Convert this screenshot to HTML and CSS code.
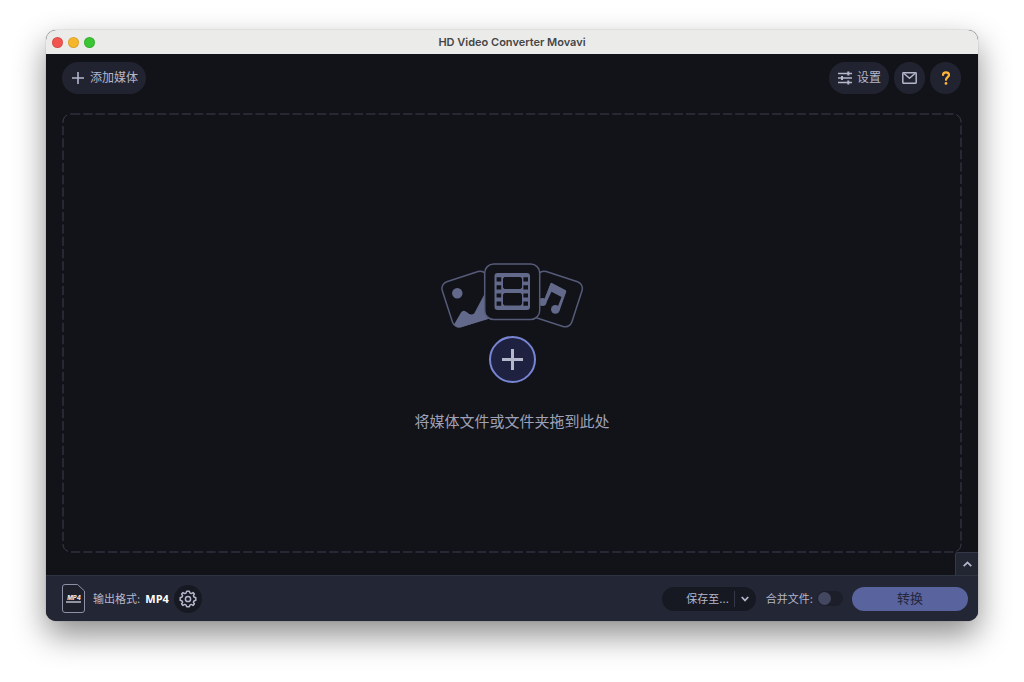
FILE: index.html
```html
<!DOCTYPE html>
<html lang="zh-CN">
<head>
<meta charset="utf-8">
<meta name="viewport" content="width=device-width, initial-scale=1">
<title>HD Video Converter Movavi</title>
<link rel="stylesheet" href="styles.css">
</head>
<body>
<div class="window">
  <header class="titlebar">
    <div class="lights">
      <button class="light light-close" aria-label="关闭"></button>
      <button class="light light-min" aria-label="最小化"></button>
      <button class="light light-zoom" aria-label="缩放"></button>
    </div>
    <h1 class="title">HD Video Converter Movavi</h1>
  </header>

  <nav class="toolbar">
    <button class="pill pill-add">
      <svg width="12" height="12" viewBox="0 0 12 12" fill="none" stroke="currentColor" stroke-width="1.6"><path d="M6 0v12M0 6h12"/></svg>
      <span>添加媒体</span>
    </button>
    <span class="spacer"></span>
    <button class="pill pill-settings">
      <svg width="14" height="14" viewBox="0 0 14 14" fill="none" stroke="currentColor" stroke-width="1.5"><path d="M0 2.500h14M0 7h14M0 11.500h14"/><path d="M10.300 0.500v4M4 5v4M10.300 9.500v4" stroke-width="2"/></svg>
      <span>设置</span>
    </button>
    <button class="pill pill-round" aria-label="邮件">
      <svg width="15" height="12" viewBox="0 0 15 12" fill="none" stroke="currentColor" stroke-width="1.5" stroke-linejoin="round"><rect x="0.8" y="0.8" width="13.4" height="10.4" rx="0.6"/><path d="M2 1.500l5.500 4.800 5.500-4.800"/></svg>
    </button>
    <button class="pill pill-round pill-help" aria-label="帮助">
      <svg width="10" height="14" viewBox="0 0 10 14" fill="none" stroke="currentColor" stroke-width="2.2" stroke-linecap="round"><path d="M2 4C2 2.200 3.200 1.300 5 1.300S8 2.300 8 4C8 6 5 6.200 5 8.800"/><circle cx="5" cy="12.400" r="1.400" fill="currentColor" stroke="none"/></svg>
    </button>
  </nav>

  <main class="content">
    <section class="dropzone">
      <svg class="outline" width="100%" height="100%"><rect width="100%" height="100%" rx="8"/></svg>
      <svg class="cards" width="146" height="68" viewBox="439 262 146 68" fill="none" stroke="#555b78" stroke-width="1.500">
        <rect x="446.200" y="275.500" width="47" height="47" rx="7" transform="rotate(-18 469.700 299)"/>
        <circle cx="457.300" cy="293.300" r="5.200" fill="#62698a" stroke="none"/>
        <path d="M454 324.500L461 312.500Q463.300 309 467 312.200Q471 316 474.300 313.200L485 293V312L490 318.500L461 327.300Q456.500 328.500 454 324.500Z" fill="#62698a" stroke="none"/>
        <rect x="531.100" y="275.500" width="47" height="47" rx="7" transform="rotate(18 554.600 299)"/>
        <g fill="#62698a" stroke="none">
          <circle cx="542.500" cy="302" r="4"/>
          <circle cx="555.400" cy="309.300" r="4.400"/>
          <path d="M550.500 283.200Q551 282.600 552 283.100L565.800 290.200Q566.500 290.800 566.200 292L559.600 310.500L556.900 309L561.500 297L551.500 291.800L546.300 302.800L544 300Z"/>
        </g>
        <rect x="484.700" y="264" width="55" height="55.500" rx="9" fill="#121318"/>
        <path fill="#62698a" stroke="none" fill-rule="evenodd" d="M497.500 273h29.500a3 3 0 0 1 3 3v31a3 3 0 0 1-3 3h-29.500a3 3 0 0 1-3-3v-31a3 3 0 0 1 3-3z
          M504.500 277l-1.500 1.500v9l1.500 1.500h16l1.500-1.500v-9l-1.500-1.500z M504.500 293l-1.500 1.500v9.500l1.500 1.500h16l1.500-1.500v-9.500l-1.500-1.500z
          M496.600 277.300h4.600v4.200h-4.600z M496.600 285.300h4.600v4.200h-4.600z M496.600 293.400h4.600v4.200h-4.600z M496.600 301.500h4.600v4.200h-4.600z
          M523.400 277.300h4.600v4.200h-4.600z M523.400 285.300h4.600v4.200h-4.600z M523.400 293.400h4.600v4.200h-4.600z M523.400 301.500h4.600v4.200h-4.600z"/>
      </svg>
      <button class="add-circle" aria-label="添加媒体">
        <svg width="21" height="21" viewBox="0 0 21 21" stroke="currentColor" stroke-width="3"><path d="M10.500 0v21M0 10.500h21"/></svg>
      </button>
      <p class="hint">将媒体文件或文件夹拖到此处</p>
    </section>
    <button class="expand" aria-label="展开">
      <svg width="9" height="6" viewBox="0 0 9 6" fill="none" stroke="currentColor" stroke-width="1.800"><path d="M0.700 5.200l3.800-3.800 3.800 3.800"/></svg>
    </button>
  </main>

  <footer class="footer">
    <svg class="format-icon" width="23" height="29" viewBox="0 0 23 29"><path d="M3 0.500H15.500L22.500 7V26a2.500 2.500 0 0 1-2.500 2.500H3A2.500 2.500 0 0 1 0.500 26V3A2.500 2.500 0 0 1 3 0.500Z" fill="#1e202b" stroke="#8d91a5"/><text x="12" y="16" text-anchor="middle">MP4</text><path d="M4 18h15" stroke="#b9bccb" stroke-width="1.400"/></svg>
    <p class="format">输出格式: <strong>MP4</strong></p>
    <button class="gear" aria-label="格式设置">
      <svg width="18" height="18" viewBox="-9 -9 18 18" fill="none" stroke="currentColor" stroke-width="1.500" stroke-linejoin="round"><path d="M-1.300-7.800H1.300L2-5.900 3.300-5.400 5-6.400 6.400-5 5.400-3.300 5.900-2 7.800-1.300V1.300L5.900 2 5.400 3.300 6.400 5 5 6.400 3.300 5.400 2 5.900 1.300 7.800H-1.300L-2 5.900-3.300 5.400-5 6.400-6.400 5-5.400 3.300-5.900 2-7.800 1.300V-1.300L-5.900-2-5.400-3.300-6.400-5-5-6.400-3.300-5.400-2-5.900Z"/><circle r="2.600"/></svg>
    </button>
    <span class="spacer"></span>
    <div class="save">
      <button class="save-main">保存至...</button>
      <button class="save-menu" aria-label="更多保存选项">
        <svg width="8" height="6" viewBox="0 0 8 6" fill="none" stroke="currentColor" stroke-width="1.800"><path d="M0.800 1l3.200 3.500L7.200 1"/></svg>
      </button>
    </div>
    <label class="merge">合并文件: <input type="checkbox" class="toggle"></label>
    <button class="convert">转换</button>
  </footer>
</div>
</body>
</html>
```
FILE: styles.css
```css
* {
  box-sizing: border-box;
}

body {
  margin: 0;
  min-height: 100vh;
  padding: 30px 46px 61px;
  display: flex;
  background: #fff;
  color: #b4b7cc;
  font: 11px/16px Inter, "Noto Sans CJK SC", sans-serif;
}

button {
  padding: 0;
  border: 0;
  background: none;
  color: inherit;
  font: inherit;
}

svg {
  display: block;
  flex: none;
}

.spacer {
  flex: 1;
}

.window {
  flex: 1;
  display: flex;
  flex-direction: column;
  overflow: hidden;
  border-radius: 10px;
  background: #121318;
  box-shadow: 0 0 1px rgba(0, 0, 0, 0.5), 0 14px 32px rgba(0, 0, 0, 0.45);
}

.titlebar {
  display: grid;
  grid-template-columns: 1fr auto 1fr;
  align-items: center;
  height: 24px;
  padding: 0 6px;
  background: #ebebea;
}

.lights {
  display: flex;
  gap: 5px;
}

.light {
  width: 11px;
  height: 11px;
  border: 1px solid rgba(0, 0, 0, 0.1);
  border-radius: 50%;
}

.light-close {
  background: #f2544f;
}

.light-min {
  background: #f6b62c;
}

.light-zoom {
  background: #3ac532;
}

.title {
  margin: 0;
  color: #454545;
  font-size: 11px;
  font-weight: 600;
}

.toolbar {
  display: flex;
  gap: 5px;
  padding: 8px 17px 8px 16px;
  font-size: 12px;
}

.pill {
  display: flex;
  align-items: center;
  justify-content: center;
  height: 32px;
  border-radius: 16px;
  background: #212430;
}

.pill-add {
  gap: 6px;
  padding: 0 8px 0 10px;
}

.pill-settings {
  gap: 5px;
  padding: 0 8px 0 9px;
}

.pill-round {
  width: 31px;
}

.pill-help {
  color: #fdb338;
}

.content {
  position: relative;
  flex: 1;
  display: flex;
  padding: 12px 17px 23px;
}

.dropzone {
  position: relative;
  flex: 1;
  display: flex;
  flex-direction: column;
  align-items: center;
  justify-content: center;
  padding-top: 28px;
}

.outline {
  position: absolute;
  inset: 0;
  overflow: visible;
  fill: none;
  stroke: #3b3e4f;
  stroke-dasharray: 9.3 3;
}

.add-circle {
  display: grid;
  place-items: center;
  width: 47px;
  height: 47px;
  margin-top: 6px;
  border: 2px solid #7885d3;
  border-radius: 50%;
  background: #1e2240;
}

.hint {
  margin: 28px 0 0;
  color: #9ea1b7;
  font-size: 15px;
  line-height: 22px;
}

.expand {
  position: absolute;
  right: 0;
  bottom: 0;
  display: grid;
  place-items: center;
  width: 23px;
  height: 23px;
  border: 1px solid #343848;
  border-width: 1px 0 0 1px;
  border-radius: 3px 0 0 0;
  background: #222532;
}

.footer {
  display: flex;
  align-items: center;
  height: 46px;
  padding: 0 10px 0 16px;
  border-top: 1px solid #2f3442;
  background: #232634;
}

.format-icon text {
  fill: #e4e5ee;
  font: italic 800 6px Inter, sans-serif;
}

.format {
  margin: 0 5px 0 8px;
}

.format strong {
  margin-left: 2px;
  color: #fff;
  font-family: "Open Sans", sans-serif;
}

.gear {
  display: grid;
  place-items: center;
  width: 28px;
  height: 28px;
  border-radius: 50%;
  background: #171922;
}

.save {
  display: flex;
  align-items: center;
  width: 94px;
  height: 24px;
  margin-right: 10px;
  border-radius: 12px;
  background: #171922;
}

.save-main {
  flex: 1;
  padding-right: 5px;
  border-right: 1px solid #343848;
  text-align: right;
}

.save-menu {
  display: grid;
  place-items: center;
  width: 21px;
  height: 24px;
}

.merge {
  display: flex;
  align-items: center;
  gap: 4px;
}

.toggle {
  appearance: none;
  display: flex;
  width: 26px;
  height: 15px;
  margin: 0;
  padding: 1px;
  border-radius: 8px;
  background: #1c1e29;
}

.toggle::before {
  content: "";
  width: 13px;
  height: 13px;
  border-radius: 50%;
  background: #434860;
}

.toggle:checked {
  justify-content: flex-end;
}

.convert {
  width: 116px;
  height: 24px;
  margin-left: 9px;
  padding-bottom: 2px;
  border-radius: 12px;
  background: #59639d;
  color: #24273e;
  font-size: 13px;
}
```
